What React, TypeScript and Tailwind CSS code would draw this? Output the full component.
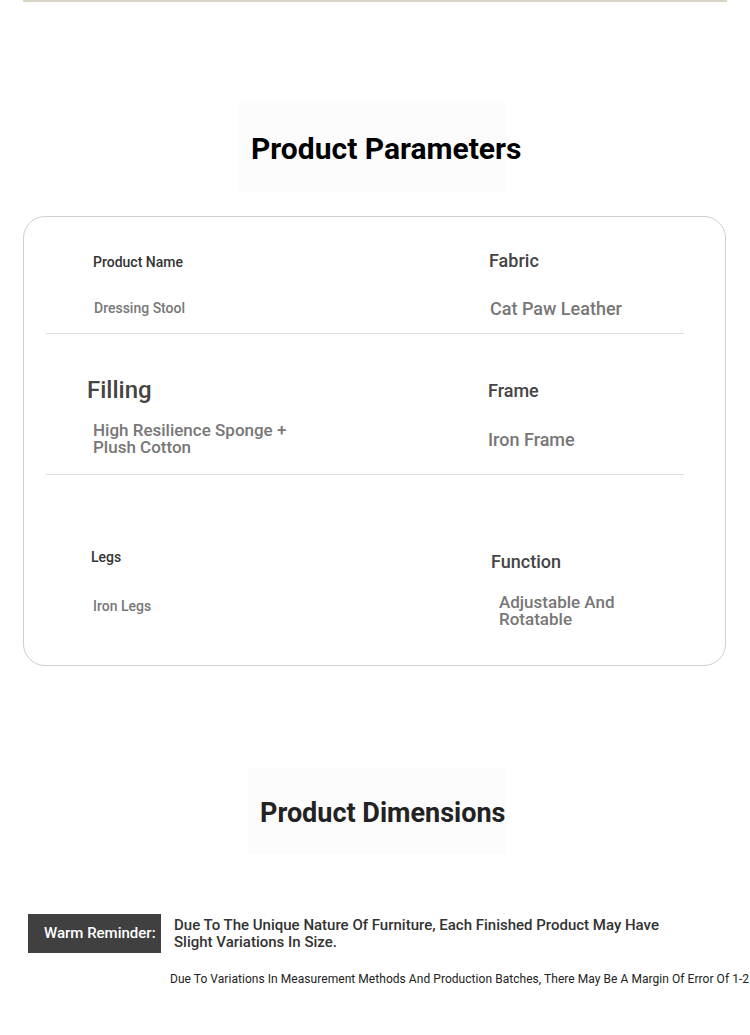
export default function App() {
  const rows = [
    {
      h: 'h-[117px]',
      divider: true,
      left: {
        label: 'Product Name',
        value: 'Dressing Stool',
        labelCls: 'pt-[35px] pl-[47px] text-[14px] leading-[20px] text-[#333]',
        valueCls: 'mt-[26px] pl-[48px] text-[14px] leading-[20px] text-[#777]',
      },
      right: {
        label: 'Fabric',
        value: 'Cat Paw Leather',
        labelCls: 'pt-[32px] pl-[47px] text-[18px] leading-[24px] text-[#444]',
        valueCls: 'mt-[24px] pl-[48px] text-[18px] leading-[24px] text-[#777]',
      },
    },
    {
      h: 'h-[141px]',
      divider: true,
      left: {
        label: 'Filling',
        value: 'High Resilience Sponge +\nPlush Cotton',
        labelCls: 'pt-[41px] pl-[41px] text-[24px] leading-[30px] text-[#444]',
        valueCls: 'mt-[17px] pl-[47px] text-[17px] leading-[17px] text-[#777] whitespace-pre-line',
      },
      right: {
        label: 'Frame',
        value: 'Iron Frame',
        labelCls: 'pt-[45px] pl-[46px] text-[18px] leading-[24px] text-[#444]',
        valueCls: 'mt-[25px] pl-[46px] text-[18px] leading-[24px] text-[#777]',
      },
    },
    {
      h: 'h-[190px]',
      divider: false,
      left: {
        label: 'Legs',
        value: 'Iron Legs',
        labelCls: 'pt-[72px] pl-[45px] text-[14px] leading-[20px] text-[#333]',
        valueCls: 'mt-[29px] pl-[47px] text-[14px] leading-[20px] text-[#777]',
      },
      right: {
        label: 'Function',
        value: 'Adjustable And\nRotatable',
        labelCls: 'pt-[75px] pl-[49px] text-[18px] leading-[24px] text-[#444]',
        valueCls: 'mt-[20px] pl-[57px] text-[17px] leading-[17px] text-[#777] whitespace-pre-line',
      },
    },
  ];

  return (
    <div className="w-[750px] h-[1035px] overflow-hidden bg-white font-['Roboto',sans-serif]">
      {/* bottom edge of the product photo above */}
      <div className="mx-[23px] h-[2px] bg-[#d8d4c6]" />

      {/* Parameters heading */}
      <div className="mt-[101px] ml-[237px] w-[270px] h-[89px] bg-[#fcfcfc] flex items-center pl-[14px] pt-[2px]">
        <h2 className="text-[30px] leading-[36px] font-bold text-black whitespace-nowrap">Product Parameters</h2>
      </div>

      {/* Parameters card */}
      <div className="mt-[24px] ml-[23px] w-[703px] h-[450px] border border-[#cfcfcf] rounded-[22px]">
        {rows.map((row, i) => (
          <div
            key={i}
            className={`ml-[22px] w-[638px] flex ${row.h} ${row.divider ? 'border-b border-[#dcdcdc]' : ''}`}
          >
            <div className="w-[396px] flex flex-col font-medium">
              <div className={row.left.labelCls}>{row.left.label}</div>
              <div className={row.left.valueCls}>{row.left.value}</div>
            </div>
            <div className="flex-1 flex flex-col font-medium">
              <div className={row.right.labelCls}>{row.right.label}</div>
              <div className={row.right.valueCls}>{row.right.value}</div>
            </div>
          </div>
        ))}
      </div>

      {/* Dimensions heading */}
      <div className="mt-[102px] ml-[248px] w-[258px] h-[86px] bg-[#fcfcfc] flex items-center pl-[12px] pt-[4px]">
        <h2 className="text-[27px] leading-[34px] font-bold text-[#222] whitespace-nowrap">Product Dimensions</h2>
      </div>

      {/* Warm reminder */}
      <div className="mt-[60px] ml-[28px] flex items-center gap-[13px]">
        <div className="w-[133px] h-[39px] bg-[#404040] flex items-center pl-[16px]">
          <span className="text-[15px] font-medium text-white whitespace-nowrap">Warm Reminder:</span>
        </div>
        <p className="text-[15px] leading-[17px] font-medium text-[#333]">
          Due To The Unique Nature Of Furniture, Each Finished Product May Have
          <br />
          Slight Variations In Size.
        </p>
      </div>
      <p className="mt-[18px] ml-[170px] text-[12px] leading-[16px] text-[#222] whitespace-nowrap tracking-[0.05px]">
        Due To Variations In Measurement Methods And Production Batches, There May Be A Margin Of Error Of 1-2
      </p>
    </div>
  );
}
